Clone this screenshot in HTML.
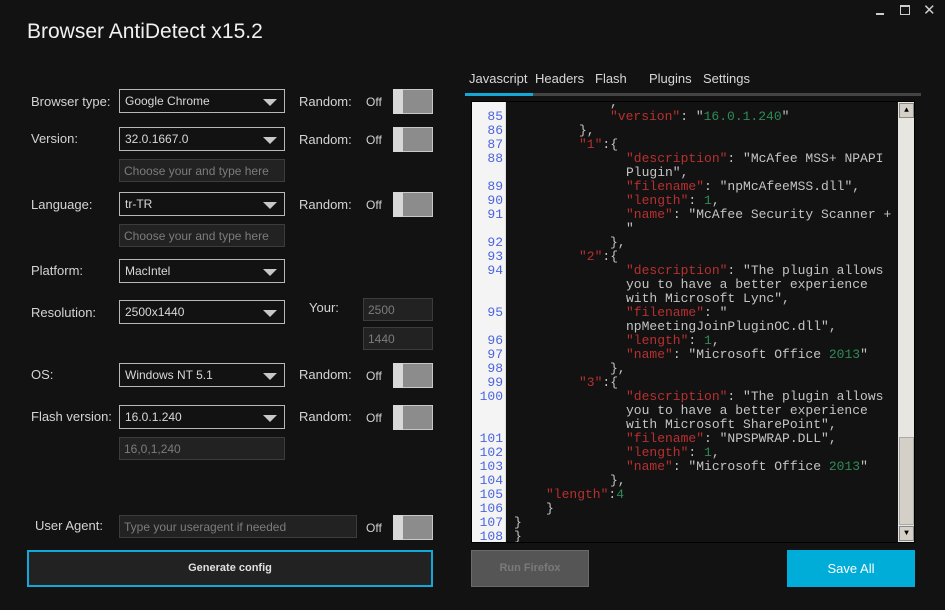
<!DOCTYPE html>
<html><head><meta charset="utf-8"><style>
*{margin:0;padding:0;box-sizing:border-box}
body{width:945px;height:610px;background:#121212;font-family:"Liberation Sans",sans-serif;color:#d0d0d0;position:relative;overflow:hidden}
.a{position:absolute}
.lbl{position:absolute;font-size:13px;color:#d4d4d4;line-height:16px}
.sel{position:absolute;border:1px solid #b8b8b8;height:24px;width:166px;font-size:12px;color:#d8d8d8;padding:4px 0 0 5px}
.sel:after{content:"";position:absolute;right:7px;top:9px;border-left:7px solid transparent;border-right:7px solid transparent;border-top:7px solid #c8c8c8}
.inp{position:absolute;border:1px solid #3c3c3c;background:#222;height:23px;font-size:12px;color:#7c7c7c;padding:4px 0 0 4px}
.tg{position:absolute;width:40px;height:25px;border:1px solid #c8c8c8;background:#8c8c8c}
.tg:before{content:"";position:absolute;left:-1px;top:-1px;width:10px;height:25px;background:#d8d8d8}
.off{position:absolute;font-size:12px;color:#d0d0d0}
.code{position:absolute;left:471px;top:101px;width:444px;height:442px;background:#121212;border:1px solid #000;overflow:hidden;font-family:"Liberation Mono",monospace;font-size:13px}
.ln{position:absolute;left:0;width:31px;text-align:right;color:#4a64e0;height:14px;line-height:14px}
.cl{position:absolute;white-space:pre;color:#c4c4c4;height:14px;line-height:14px}
.k{color:#b83030}.n{color:#2e8b57}
</style></head><body>
<div class="a" style="left:27px;top:20px;font-size:21px;color:#f0f0f0">Browser AntiDetect x15.2</div>
<div class="a" style="left:876px;top:13px;width:8px;height:2px;background:#ccc"></div>
<div class="a" style="left:900px;top:5px;width:10px;height:10px;border:1px solid #ccc;border-top-width:2px"></div>
<div class="a" style="left:923px;top:1px;font-size:15px;color:#ccc">✕</div>

<div class="lbl" style="left:31px;top:94px">Browser type:</div>
<div class="sel" style="left:119px;top:89px">Google Chrome</div>
<div class="lbl" style="left:299px;top:94px">Random:</div><div class="off" style="left:366px;top:95px">Off</div><div class="tg" style="left:393px;top:89px"></div>

<div class="lbl" style="left:31px;top:131px">Version:</div>
<div class="sel" style="left:119px;top:127px">32.0.1667.0</div>
<div class="lbl" style="left:299px;top:132px">Random:</div><div class="off" style="left:366px;top:133px">Off</div><div class="tg" style="left:393px;top:127px"></div>
<div class="inp" style="left:119px;top:159px;width:166px">Choose your and type here</div>

<div class="lbl" style="left:31px;top:197px">Language:</div>
<div class="sel" style="left:119px;top:192px">tr-TR</div>
<div class="lbl" style="left:299px;top:197px">Random:</div><div class="off" style="left:366px;top:198px">Off</div><div class="tg" style="left:393px;top:192px"></div>
<div class="inp" style="left:119px;top:224px;width:166px">Choose your and type here</div>

<div class="lbl" style="left:31px;top:263px">Platform:</div>
<div class="sel" style="left:119px;top:259px">MacIntel</div>

<div class="lbl" style="left:31px;top:305px">Resolution:</div>
<div class="sel" style="left:119px;top:300px">2500x1440</div>
<div class="lbl" style="left:309px;top:300px">Your:</div>
<div class="inp" style="left:363px;top:298px;width:70px">2500</div>
<div class="inp" style="left:363px;top:327px;width:70px">1440</div>

<div class="lbl" style="left:31px;top:367px">OS:</div>
<div class="sel" style="left:119px;top:363px">Windows NT 5.1</div>
<div class="lbl" style="left:299px;top:367px">Random:</div><div class="off" style="left:366px;top:369px">Off</div><div class="tg" style="left:393px;top:363px"></div>

<div class="lbl" style="left:31px;top:409px">Flash version:</div>
<div class="sel" style="left:119px;top:405px">16.0.1.240</div>
<div class="lbl" style="left:299px;top:409px">Random:</div><div class="off" style="left:366px;top:411px">Off</div><div class="tg" style="left:393px;top:405px"></div>
<div class="inp" style="left:119px;top:437px;width:166px">16,0,1,240</div>

<div class="lbl" style="left:35px;top:518px">User Agent:</div>
<div class="inp" style="left:119px;top:515px;width:238px">Type your useragent if needed</div>
<div class="off" style="left:366px;top:521px">Off</div><div class="tg" style="left:393px;top:515px"></div>

<div class="a" style="left:27px;top:550px;width:406px;height:37px;border:2px solid #14a8d8;background:#222;color:#e0e0e0;font-size:11px;font-weight:bold;text-align:center;line-height:33px">Generate config</div>

<div class="a" style="left:469px;top:71px;font-size:13px;color:#d8d8d8">Javascript</div>
<div class="a" style="left:535px;top:71px;font-size:13px;color:#d8d8d8">Headers</div>
<div class="a" style="left:595px;top:71px;font-size:13px;color:#d8d8d8">Flash</div>
<div class="a" style="left:649px;top:71px;font-size:13px;color:#d8d8d8">Plugins</div>
<div class="a" style="left:703px;top:71px;font-size:13px;color:#d8d8d8">Settings</div>
<div class="a" style="left:465px;top:93px;width:456px;height:3px;background:#444"></div>
<div class="a" style="left:465px;top:93px;width:68px;height:3px;background:#14a8d8"></div>

<div class="code">
<div class="a" style="left:0;top:0;width:34px;height:442px;background:#f4f4f4;border-right:1px solid #ddd"></div>
<div class="a" style="left:426px;top:0;width:17px;height:442px;background:#e8e6e0"></div>
<div class="a" style="left:427px;top:1px;width:15px;height:15px;background:#d4d0c8;border:1px solid #888;font-size:8px;text-align:center;line-height:13px;color:#000">▲</div>
<div class="a" style="left:427px;top:335px;width:15px;height:88px;background:#d4d0c8;border:1px solid #aaa"></div>
<div class="a" style="left:427px;top:424px;width:15px;height:15px;background:#d4d0c8;border:1px solid #888;font-size:8px;text-align:center;line-height:13px;color:#000">▼</div>
<div id="c"></div>
</div>
<script>
var L=[
[null,139,','],
[85,139,'<span class=k>"version"</span>: "<span class=n>16.0.1.240</span>"'],
[86,108,'},'],
[87,108,'<span class=k>"1"</span>:{'],
[88,155,'<span class=k>"description"</span>: "McAfee MSS+ NPAPI'],
[null,155,'Plugin",'],
[89,155,'<span class=k>"filename"</span>: "npMcAfeeMSS.dll",'],
[90,155,'<span class=k>"length"</span>: <span class=n>1</span>,'],
[91,155,'<span class=k>"name"</span>: "McAfee Security Scanner +'],
[null,155,'"'],
[92,139,'},'],
[93,108,'<span class=k>"2"</span>:{'],
[94,155,'<span class=k>"description"</span>: "The plugin allows'],
[null,155,'you to have a better experience'],
[null,155,'with Microsoft Lync",'],
[95,155,'<span class=k>"filename"</span>: "'],
[null,155,'npMeetingJoinPluginOC.dll",'],
[96,155,'<span class=k>"length"</span>: <span class=n>1</span>,'],
[97,155,'<span class=k>"name"</span>: "Microsoft Office <span class=n>2013</span>"'],
[98,139,'},'],
[99,108,'<span class=k>"3"</span>:{'],
[100,155,'<span class=k>"description"</span>: "The plugin allows'],
[null,155,'you to have a better experience'],
[null,155,'with Microsoft SharePoint",'],
[101,155,'<span class=k>"filename"</span>: "NPSPWRAP.DLL",'],
[102,155,'<span class=k>"length"</span>: <span class=n>1</span>,'],
[103,155,'<span class=k>"name"</span>: "Microsoft Office <span class=n>2013</span>"'],
[104,139,'},'],
[105,75,'<span class=k>"length"</span>:<span class=n>4</span>'],
[106,75,'}'],
[107,43,'}'],
[108,43,'}']];
var h='';
L.forEach(function(r,i){var t=i*14-6;
if(r[0]!==null)h+='<div class=ln style="top:'+t+'px">'+r[0]+'</div>';
h+='<div class=cl style="left:'+(r[1]-1)+'px;top:'+t+'px">'+r[2]+'</div>';});
document.getElementById('c').innerHTML=h;
</script>

<div class="a" style="left:471px;top:550px;width:118px;height:37px;background:#555;border:1px solid #6a6a6a;color:#7a7a7a;font-size:11px;font-weight:bold;text-align:center;line-height:35px">Run Firefox</div>
<div class="a" style="left:787px;top:550px;width:128px;height:37px;background:#00acd8;color:#fff;font-size:13px;text-align:center;line-height:37px">Save All</div>
</body></html>
